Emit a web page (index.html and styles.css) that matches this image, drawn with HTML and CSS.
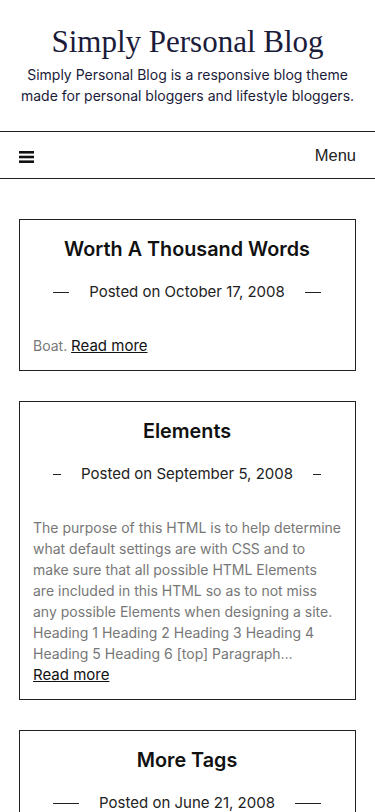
FILE: index.html
```html
<!DOCTYPE html>
<html lang="en">
<head>
  <meta charset="UTF-8">
  <meta name="viewport" content="width=device-width, initial-scale=1">
  <title>Simply Personal Blog</title>
  <link rel="stylesheet" href="styles.css">
</head>
<body>
  <header class="site-header">
    <h1 class="site-title">Simply Personal Blog</h1>
    <p class="site-desc">Simply Personal Blog is a responsive blog theme made for personal bloggers and lifestyle bloggers.</p>
  </header>

  <nav class="main-nav">
    <svg class="bars" width="15" height="12" viewBox="0 0 15 12">
      <rect x="0" y="0" width="15" height="2.6"/>
      <rect x="0" y="4.7" width="15" height="2.6"/>
      <rect x="0" y="9.4" width="15" height="2.6"/>
    </svg>
    <span class="menu-label">Menu</span>
  </nav>

  <main class="posts">
    <article class="post">
      <h2 class="post-title">Worth A Thousand Words</h2>
      <div class="post-meta"><span class="line"></span><span>Posted on October 17, 2008</span><span class="line"></span></div>
      <p class="excerpt">Boat. <a href="#" class="more">Read more</a></p>
    </article>

    <article class="post">
      <h2 class="post-title">Elements</h2>
      <div class="post-meta"><span class="line"></span><span>Posted on September 5, 2008</span><span class="line"></span></div>
      <p class="excerpt">The purpose of this HTML is to help determine what default settings are with CSS and to make sure that all possible HTML Elements are included in this HTML so as to not miss any possible Elements when designing a site. Heading 1 Heading 2 Heading 3 Heading 4 Heading 5 Heading 6 [top] Paragraph&hellip; <a href="#" class="more">Read more</a></p>
    </article>

    <article class="post">
      <h2 class="post-title">More Tags</h2>
      <div class="post-meta"><span class="line"></span><span>Posted on June 21, 2008</span><span class="line"></span></div>
      <p class="excerpt">More tags to test the theme layout and styles.</p>
    </article>
  </main>
</body>
</html>
```

FILE: styles.css
```css
body {
  margin: 0;
  font-family: 'Inter', 'Noto Sans', sans-serif;
  color: #222;
  background: #fff;
}

.site-header {
  text-align: center;
  padding: 24px 16px 25px;
}

.site-title {
  margin: 0;
  font-family: 'Liberation Serif', 'DejaVu Serif', serif;
  font-weight: normal;
  font-size: 31px;
  line-height: 36px;
  color: #1b1b3a;
}

.site-desc {
  margin: 4px 0 0;
  font-size: 14px;
  line-height: 21px;
  color: #1b1b3a;
}

.main-nav {
  display: flex;
  justify-content: space-between;
  align-items: center;
  height: 46px;
  padding: 0 19px;
  border-top: 1px solid #222;
  border-bottom: 1px solid #222;
}

.bars {
  fill: #111;
  margin-top: 3px;
}

.menu-label {
  font-family: 'Liberation Sans', Arial, sans-serif;
  font-size: 16.5px;
  color: #222;
}

.posts {
  padding: 40px 19px;
  display: flex;
  flex-direction: column;
  gap: 30px;
}

.post {
  border: 1px solid #222;
  padding: 14px 14px 14px 13px;
}

.post-title {
  margin: 0;
  text-align: center;
  font-size: 19.8px;
  font-weight: 600;
  line-height: 30px;
  color: #111;
}

.post-meta {
  display: flex;
  align-items: center;
  gap: 20px;
  margin: 16px 20px 0 20px;
  font-size: 15px;
  line-height: 24px;
  color: #222;
  white-space: nowrap;
}

.post-meta .line {
  flex: 1;
  height: 1px;
  background: #222;
}

.excerpt {
  margin: 31px 0 0;
  font-size: 14px;
  line-height: 21px;
  color: #777;
}

.more {
  display: inline-block;
  color: #111;
  font-size: 15px;
  text-decoration: underline;
}
```
